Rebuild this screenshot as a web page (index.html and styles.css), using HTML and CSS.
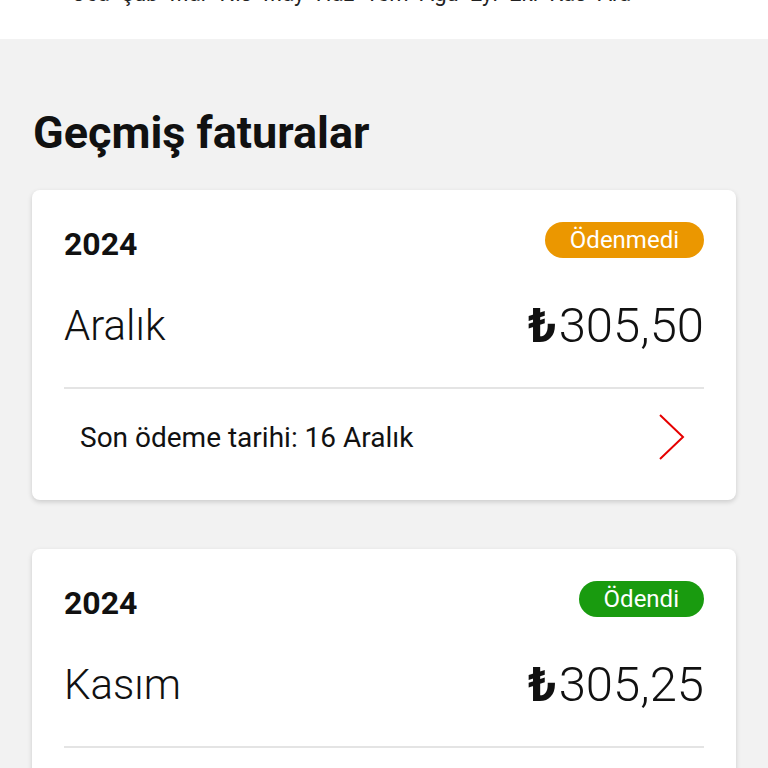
FILE: index.html
```html
<!DOCTYPE html>
<html lang="tr">
<head>
    <meta charset="UTF-8">
    <meta name="viewport" content="width=device-width, initial-scale=1.0">
    <title>Geçmiş faturalar</title>
    <link rel="stylesheet" href="styles.css">
</head>
<body>
    <div class="chart-strip">
        <div class="months">
            <span>Oca</span><span>Şub</span><span>Mar</span><span>Nis</span>
            <span>May</span><span>Haz</span><span>Tem</span><span>Ağu</span>
            <span>Eyl</span><span>Eki</span><span>Kas</span><span>Ara</span>
        </div>
    </div>

    <main class="history">
        <h1 class="history-title">Geçmiş faturalar</h1>

        <article class="bill-card">
            <div class="bill-head">
                <span class="bill-year">2024</span>
                <span class="badge badge-unpaid">Ödenmedi</span>
            </div>
            <div class="bill-main">
                <span class="bill-month">Aralık</span>
                <span class="bill-amount"><b>₺</b>305,50</span>
            </div>
            <div class="bill-foot">
                <span class="bill-due">Son ödeme tarihi: 16 Aralık</span>
                <svg class="chevron" width="30" height="48" viewBox="0 0 30 48">
                    <path d="M3 2 L26 24 L3 46" fill="none" stroke="#e60000" stroke-width="2"/>
                </svg>
            </div>
        </article>

        <article class="bill-card">
            <div class="bill-head">
                <span class="bill-year">2024</span>
                <span class="badge badge-paid">Ödendi</span>
            </div>
            <div class="bill-main">
                <span class="bill-month">Kasım</span>
                <span class="bill-amount"><b>₺</b>305,25</span>
            </div>
            <div class="bill-foot">
                <span class="bill-due">Son ödeme tarihi: 16 Kasım</span>
                <svg class="chevron" width="30" height="48" viewBox="0 0 30 48">
                    <path d="M3 2 L26 24 L3 46" fill="none" stroke="#e60000" stroke-width="2"/>
                </svg>
            </div>
        </article>
    </main>
</body>
</html>
```

FILE: styles.css
```css
* {
    margin: 0;
    padding: 0;
    box-sizing: border-box;
    font-family: Roboto, 'Noto Sans', sans-serif;
}

body {
    background-color: #f2f2f2;
    color: #111;
    overflow: hidden;
}

/* Chart month labels (cut off at top) */
.chart-strip {
    height: 39px;
    background: #fff;
    overflow: hidden;
}

.months {
    display: flex;
    justify-content: space-between;
    width: 560px;
    margin-left: 71px;
    margin-top: -21px;
    font-size: 22px;
    line-height: 30px;
    color: #222;
}

/* Bill history */
.history {
    padding: 68px 32px 0;
}

.history-title {
    font-size: 45px;
    font-weight: 700;
    line-height: 52px;
    margin-bottom: 31px;
    margin-left: 1px;
}

.bill-card {
    background: #fff;
    border-radius: 8px;
    box-shadow: 0 2px 5px rgba(0, 0, 0, 0.16);
    padding: 32px 32px 0;
    margin-bottom: 49px;
    height: 310px;
}

.bill-head {
    display: flex;
    justify-content: space-between;
    align-items: center;
    height: 36px;
}

.bill-year {
    font-size: 32px;
    font-weight: 700;
    padding-top: 8px;
}

.badge {
    height: 36px;
    line-height: 36px;
    padding: 0 25px;
    border-radius: 18px;
    color: #fff;
    font-size: 24px;
}

.badge-unpaid {
    background: #eb9700;
}

.badge-paid {
    background: #199b0f;
}

.bill-main {
    display: flex;
    justify-content: space-between;
    align-items: center;
    height: 56px;
    margin-top: 39px;
    padding-bottom: 34px;
    box-sizing: content-box;
    border-bottom: 2px solid #e4e4e4;
}

.bill-month {
    font-size: 42px;
    font-weight: 300;
}

.bill-amount {
    font-size: 49px;
    font-weight: 300;
}

.bill-amount b {
    font-weight: 700;
    margin-right: 2px;
}

.bill-foot {
    display: flex;
    justify-content: space-between;
    align-items: center;
    height: 48px;
    margin-top: 24px;
    padding: 0 17px 0 16px;
}

.bill-due {
    font-size: 28px;
}
```
